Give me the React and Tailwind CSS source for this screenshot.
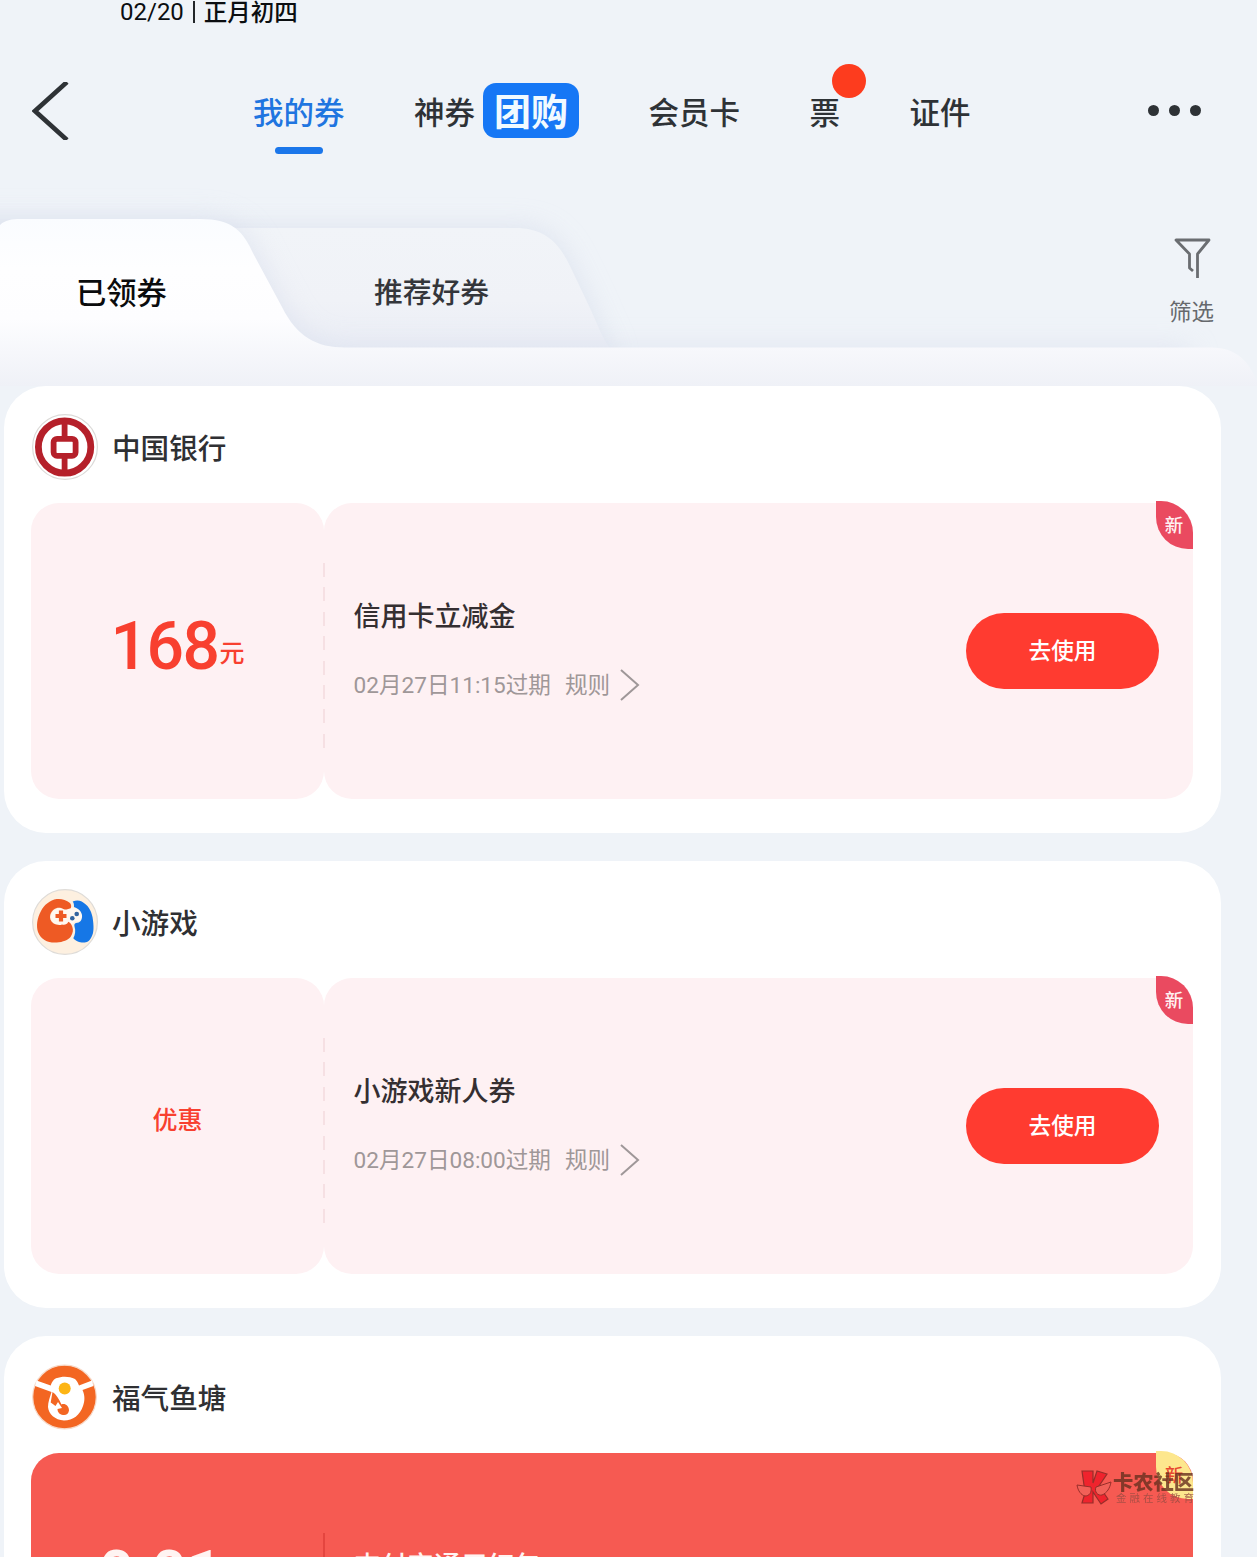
import clsx from "clsx";

// -------------------------------------------------------------------------
// Data
// -------------------------------------------------------------------------
const coupons = [
	{
		shop: "中国银行",
		logo: BankLogo,
		amount: "168",
		unit: "元",
		title: "信用卡立减金",
		expires: "02月27日11:15过期",
	},
	{
		shop: "小游戏",
		logo: GameLogo,
		label: "优惠",
		title: "小游戏新人券",
		expires: "02月27日08:00过期",
	},
];

// -------------------------------------------------------------------------
// Logos
// -------------------------------------------------------------------------
function BankLogo() {
	return (
		<svg viewBox="0 0 66 66" className="size-[66px]">
			<circle cx="33" cy="33" r="32.4" fill="#fff" stroke="#dcdad8" strokeWidth="1.2" />
			<circle cx="32.6" cy="33" r="26.2" fill="none" stroke="#b5202a" strokeWidth="6.8" />
			<path d="M32.6 8v16M32.6 43v16" stroke="#b5202a" strokeWidth="5.8" />
			<rect x="21.6" y="24.8" width="22" height="17" rx="3.5" fill="#fff" stroke="#b5202a" strokeWidth="5.8" />
		</svg>
	);
}

function GameLogo() {
	return (
		<svg viewBox="0 0 66 66" className="size-[66px]">
			<circle cx="33" cy="33" r="32.4" fill="#fdf0e0" stroke="#dfdcd8" strokeWidth="1.2" />
			<path d="M19 27C20 20 27 18 34 19C42 17 50 20 50.500 27C50 32 46 33 43 32C40 37 34 38 27 36C21 35 19 32 19 27Z" fill="#fff8f0" />
			<path
				d="M40.700 12.500C44 11 47 11 49.700 12.500C56 16 59 21 60.500 28C62 37 62 44 59.500 48C57 53 54 54 49.700 53.500C46 53 43 51.500 41.300 49.300C43 46 44 42 42.500 37.500C42 35.500 42.500 34.500 44 34C48 34 50.500 31 50 26C49 21 45 19 42 18C42 16 42 14 40.700 12.500Z"
				fill="#1677e6"
			/>
			<path
				d="M38 14C34 10.500 29 9.500 24.700 10C18 11 12 16 9 22C5 29 4 37 6 43C9 51 16 54 24.700 53.500C31 53 36 51 38.700 47.700C41 44 41.500 41 40.300 37.700C39.500 35 38 33.500 36.300 32.700C35 35.500 33 36 30 35.500C28 36.500 24 36 21.300 34.300C18.500 32 17.500 29 18.200 26C20 20.500 24 18.200 28 18.700C31 19.500 33 21 34.500 20.500L38.700 19.300C39.500 17.500 39.300 15.500 38 14Z"
				fill="#ee5a24"
			/>
			<path d="M29 21.500v11M23.500 27h11" stroke="#ee5a24" strokeWidth="4.200" />
			<circle cx="44.700" cy="25" r="2.300" fill="#34659f" />
			<circle cx="40.300" cy="29.300" r="2.300" fill="#34659f" />
		</svg>
	);
}

function FishLogo() {
	return (
		<svg viewBox="0 0 66 66" className="size-[66px]">
			<circle cx="32.500" cy="33" r="31.800" fill="#f36622" stroke="#f7d9c8" strokeWidth="1.200" />
			<path
				d="M4.500 16.500L18.700 21.500C20 18 21 16 24 14.300C30 12 37 12 43 15C45 17 46 19 47 21.500L60 16.500L61.500 22L50.500 26C53 31 53 37 51 42C48 51 41 56.500 32 56.500C23 56 16.500 50 16 43C16 38 18 33 19.500 28L3 22Z"
				fill="#fff"
			/>
			<circle cx="32.700" cy="24.500" r="6" fill="#fdb515" />
			<path
				d="M20.500 28C24 30 27 35 29.500 40.500C33 39 37 42 37 46.500C36.500 50 34 51.500 31 51C27.500 50.500 25.500 48 25.500 45L30 44L26 38L23.500 42L18.700 38.500Z"
				fill="#f36622"
			/>
		</svg>
	);
}

// -------------------------------------------------------------------------
// Header
// -------------------------------------------------------------------------
function StatusBar() {
	return (
		<div className="flex h-6 items-center pl-[120px] text-[24px] leading-6 text-[#0b0e11]">
			<span className="font-[Roboto,sans-serif]">02/20</span>
			<span className="mx-[9px] h-[22px] w-0.5 bg-[#22262a]" />
			<span className="-translate-y-[1.500px] text-[23.500px] font-medium">正月初四</span>
		</div>
	);
}

function NavBar() {
	return (
		<nav className="flex h-[173px] items-center text-[30.500px] font-medium leading-10 text-[#2e3236]">
			<svg viewBox="0 0 37 58" className="ml-8 h-[58px] w-[37px]">
				<path d="M35 0L3 29L35 58" fill="none" stroke="#2e3236" strokeWidth="4.600" />
			</svg>
			<div className="ml-[184px] flex items-center gap-[69.500px]">
				<span className="relative text-[#1f75e0]">
					我的券
					<span className="absolute -bottom-[23px] left-[22px] h-[7px] w-12 rounded-full bg-[#1b76ea]" />
				</span>
				<span className="flex items-center gap-2">
					神券
					<span className="flex h-[55px] w-24 items-center justify-center rounded-[13px] bg-[#1677f5] pb-0.5 text-[37px] font-bold text-[#f2faff]">
						团购
					</span>
				</span>
				<span>会员卡</span>
				<span className="relative">
					票
					<span className="absolute -top-[27px] left-[22px] size-[34px] rounded-full bg-[#fd3c1e]" />
				</span>
				<span>证件</span>
			</div>
			<div className="ml-auto mr-14 flex gap-2.5">
				<i className="size-[11px] rounded-full bg-[#2e3236]" />
				<i className="size-[11px] rounded-full bg-[#2e3236]" />
				<i className="size-[11px] rounded-full bg-[#2e3236]" />
			</div>
		</nav>
	);
}

// Folder-like tabs: the front sheet runs on to the right under the back one
function FolderTabs() {
	return (
		<div className="relative mt-px flex h-[188px]">
			<svg viewBox="0 198 1257 188" className="absolute inset-0 h-[188px] w-full overflow-visible">
				<defs>
					<linearGradient id="front" gradientUnits="userSpaceOnUse" x1="0" y1="219" x2="0" y2="386">
						<stop offset="0" stopColor="#fafcff" />
						<stop offset="0.3" stopColor="#fefeff" />
						<stop offset="0.6" stopColor="#fdfdff" />
						<stop offset="0.8" stopColor="#f6f7fb" />
						<stop offset="1" stopColor="#eff1f7" />
					</linearGradient>
					<linearGradient id="back" x1="0" y1="0" x2="0" y2="1">
						<stop offset="0" stopColor="#f1f4f8" />
						<stop offset="0.6" stopColor="#f0f2f7" />
						<stop offset="1" stopColor="#eaedf5" />
					</linearGradient>
					<filter id="soft" x="-10%" y="-30%" width="120%" height="160%">
						<feGaussianBlur stdDeviation="14" />
					</filter>
					<clipPath id="strip">
						<rect x="0" y="150" width="1257" height="236" />
					</clipPath>
				</defs>
				<g clipPath="url(#strip)">
					<path
						d="M-40 228H520C548 228 560 245 572 270L590 308C600 330 602 340 610 348V440H-40Z"
						fill="#d9dfec"
						opacity="0.8"
						filter="url(#soft)"
					/>
					<path d="M200 228H515C545 228 559 243 570 266L589 306C597 323 602 338 610 348H200Z" fill="url(#back)" />
					<path
						d="M-40 219H200C235 219 247 232 258 258L285 310C300 338 318 348 345 348H1190V440H-40Z"
						fill="#d5dbeb"
						opacity="0.6"
						filter="url(#soft)"
					/>
					<path
						d="M0 225C5 220 12 219 20 219H200C233 219 243 231 254 255L282 307C297 337 317 347.500 345 347.500H1212C1236 347.500 1250 362 1257 382V386H0Z"
						fill="url(#front)"
					/>
				</g>
			</svg>
			<div className="relative flex w-full pt-[73px] leading-10">
				<span className="ml-[76px] text-[30.300px] font-medium text-[#0a0b0d]">已领券</span>
				<span className="ml-[207px] text-[28.800px] font-medium text-[#34363b]">推荐好券</span>
				<div className="-mt-[34px] ml-auto mr-[42px] flex flex-col items-center">
					<svg viewBox="0 0 38 42" className="h-[42px] w-[38px]">
						<path
							d="M20 34L16.500 31V17L3 3H36L24.500 17V41"
							fill="none"
							stroke="#6a6d71"
							strokeWidth="2.800"
							strokeLinejoin="round"
						/>
					</svg>
					<span className="mt-[11px] -translate-x-px text-[22.500px] text-[#66696d]">筛选</span>
				</div>
			</div>
		</div>
	);
}

// -------------------------------------------------------------------------
// Cards
// -------------------------------------------------------------------------
function Card({ shop, logo: Logo, children }) {
	return (
		<section className="h-[447px] w-[1217px] shrink-0 rounded-[42px] bg-white pl-[27px] pt-7">
			<header className="flex h-[66px] items-center gap-[14.500px] pl-[0.500px]">
				<Logo />
				<h2 className="text-[28.600px] font-medium leading-10 text-[#2f3033]">{shop}</h2>
			</header>
			{children}
		</section>
	);
}

function NewBadge({ className }) {
	return (
		<span
			className={clsx(
				"absolute -top-0.5 right-0 flex h-12 w-[37px] items-center justify-center rounded-bl-[32px] rounded-tr-[32px] pb-px pr-px text-[18.500px] font-medium leading-none",
				className
			)}
		>
			新
		</span>
	);
}

function Coupon({ amount, unit, label, title, expires }) {
	return (
		<div className="relative mt-[22.500px] flex h-[296px] w-[1162px]">
			<div className="flex w-[293px] items-center justify-center rounded-[28px] bg-[#fef1f3] font-medium text-[#f8402f]">
				{amount ? (
					<p className="flex items-center leading-[70px]">
						<span className="-translate-y-[4.500px] font-[Roboto,sans-serif] text-[66px] tracking-[-1.500px]">{amount}</span>
						<span className="ml-px text-[25px]">{unit}</span>
					</p>
				) : (
					<p className="-translate-y-[7px] text-[25px]">{label}</p>
				)}
			</div>
			<div className="flex flex-1 items-center justify-between rounded-[28px] bg-[#fef1f3] pl-[29.500px] pr-[34px]">
				<div>
					<h3 className="-translate-y-px text-[27px] font-medium leading-10 text-[#352f31]">{title}</h3>
					<p className="mt-[30px] flex -translate-y-px items-center font-[Roboto,'Noto_Sans_CJK_SC',sans-serif] text-[22.600px] leading-10 text-[#9f9798]">
						<span className="translate-y-px">{expires}</span>
						<span className="ml-3.5 translate-y-px">规则</span>
						<svg viewBox="0 0 20 34" className="ml-2.5 h-[34px] w-5">
							<path d="M1 2L18 17L1 32" fill="none" stroke="#9f9798" strokeWidth="2" />
						</svg>
					</p>
				</div>
				<button className="h-[76px] w-[193px] rounded-full bg-[#ff3b30] text-[22.700px] font-medium text-white">
					去使用
				</button>
			</div>
			<span className="absolute left-[292px] top-[60px] h-[185px] w-0.5 bg-[repeating-linear-gradient(to_bottom,#f6e0e3_0,#f6e0e3_14px,transparent_14px,transparent_24.400px)]" />
			<NewBadge className="bg-[#ea4a60] text-[#fff1f2]" />
		</div>
	);
}

function RedPacket() {
	return (
		<div className="relative mt-[22.500px] flex h-[296px] w-[1162px] rounded-[28px] bg-[#f65a52] text-[#fff4f2]">
			<p className="w-[293px] pl-[68px] pt-[80px] font-[Roboto,sans-serif] text-[61px] font-bold leading-[80px]">
				0.01
			</p>
			<h3 className="pl-[30px] pt-[91px] text-[26.700px] font-medium leading-10">支付宝通用红包</h3>
			<span className="absolute left-[292px] top-[80px] h-[185px] w-0.5 bg-[#e4453f]" />
			<NewBadge className="bg-[#fde78d] text-[#e8472f]" />
			<Watermark />
		</div>
	);
}

function Watermark() {
	return (
		<div className="absolute left-[1045px] top-[15px] flex items-center gap-px opacity-80">
			<svg viewBox="0 0 36 38" className="h-[38px] w-9">
				<path
					d="M6 3H17V15L21 3L31 6L23 18L32 31L25 36L17 24V35H6L9 25L8 17Z"
					fill="#ef1624"
					stroke="#7f2320"
					strokeWidth="1.200"
				/>
				<path
					d="M1 17L15 19C16 25 13 28 9 28C5 27 2 23 1 17ZM35 14L20 19C18 24 22 28 26 27C31 25 34 20 35 14Z"
					fill="#f0625a"
					stroke="#7f2320"
					strokeWidth="1"
				/>
			</svg>
			<div className="whitespace-nowrap">
				<p className="text-[20.300px] font-black leading-[22px] text-[#68301f]">卡农社区</p>
				<p className="pl-[3px] text-[10.500px] leading-[12px] tracking-[3px] text-[#984c42]">金融在线教育</p>
			</div>
		</div>
	);
}

export default function App() {
	return (
		<main className="h-[1557px] w-[1257px] overflow-hidden bg-[#eff3f8] font-['Noto_Sans_CJK_SC',sans-serif]">
			<StatusBar />
			<NavBar />
			<FolderTabs />
			<div className="flex flex-col gap-7 pl-1">
				{coupons.map(({ shop, logo, ...coupon }) => (
					<Card key={shop} shop={shop} logo={logo}>
						<Coupon {...coupon} />
					</Card>
				))}
				<Card shop="福气鱼塘" logo={FishLogo}>
					<RedPacket />
				</Card>
			</div>
		</main>
	);
}
